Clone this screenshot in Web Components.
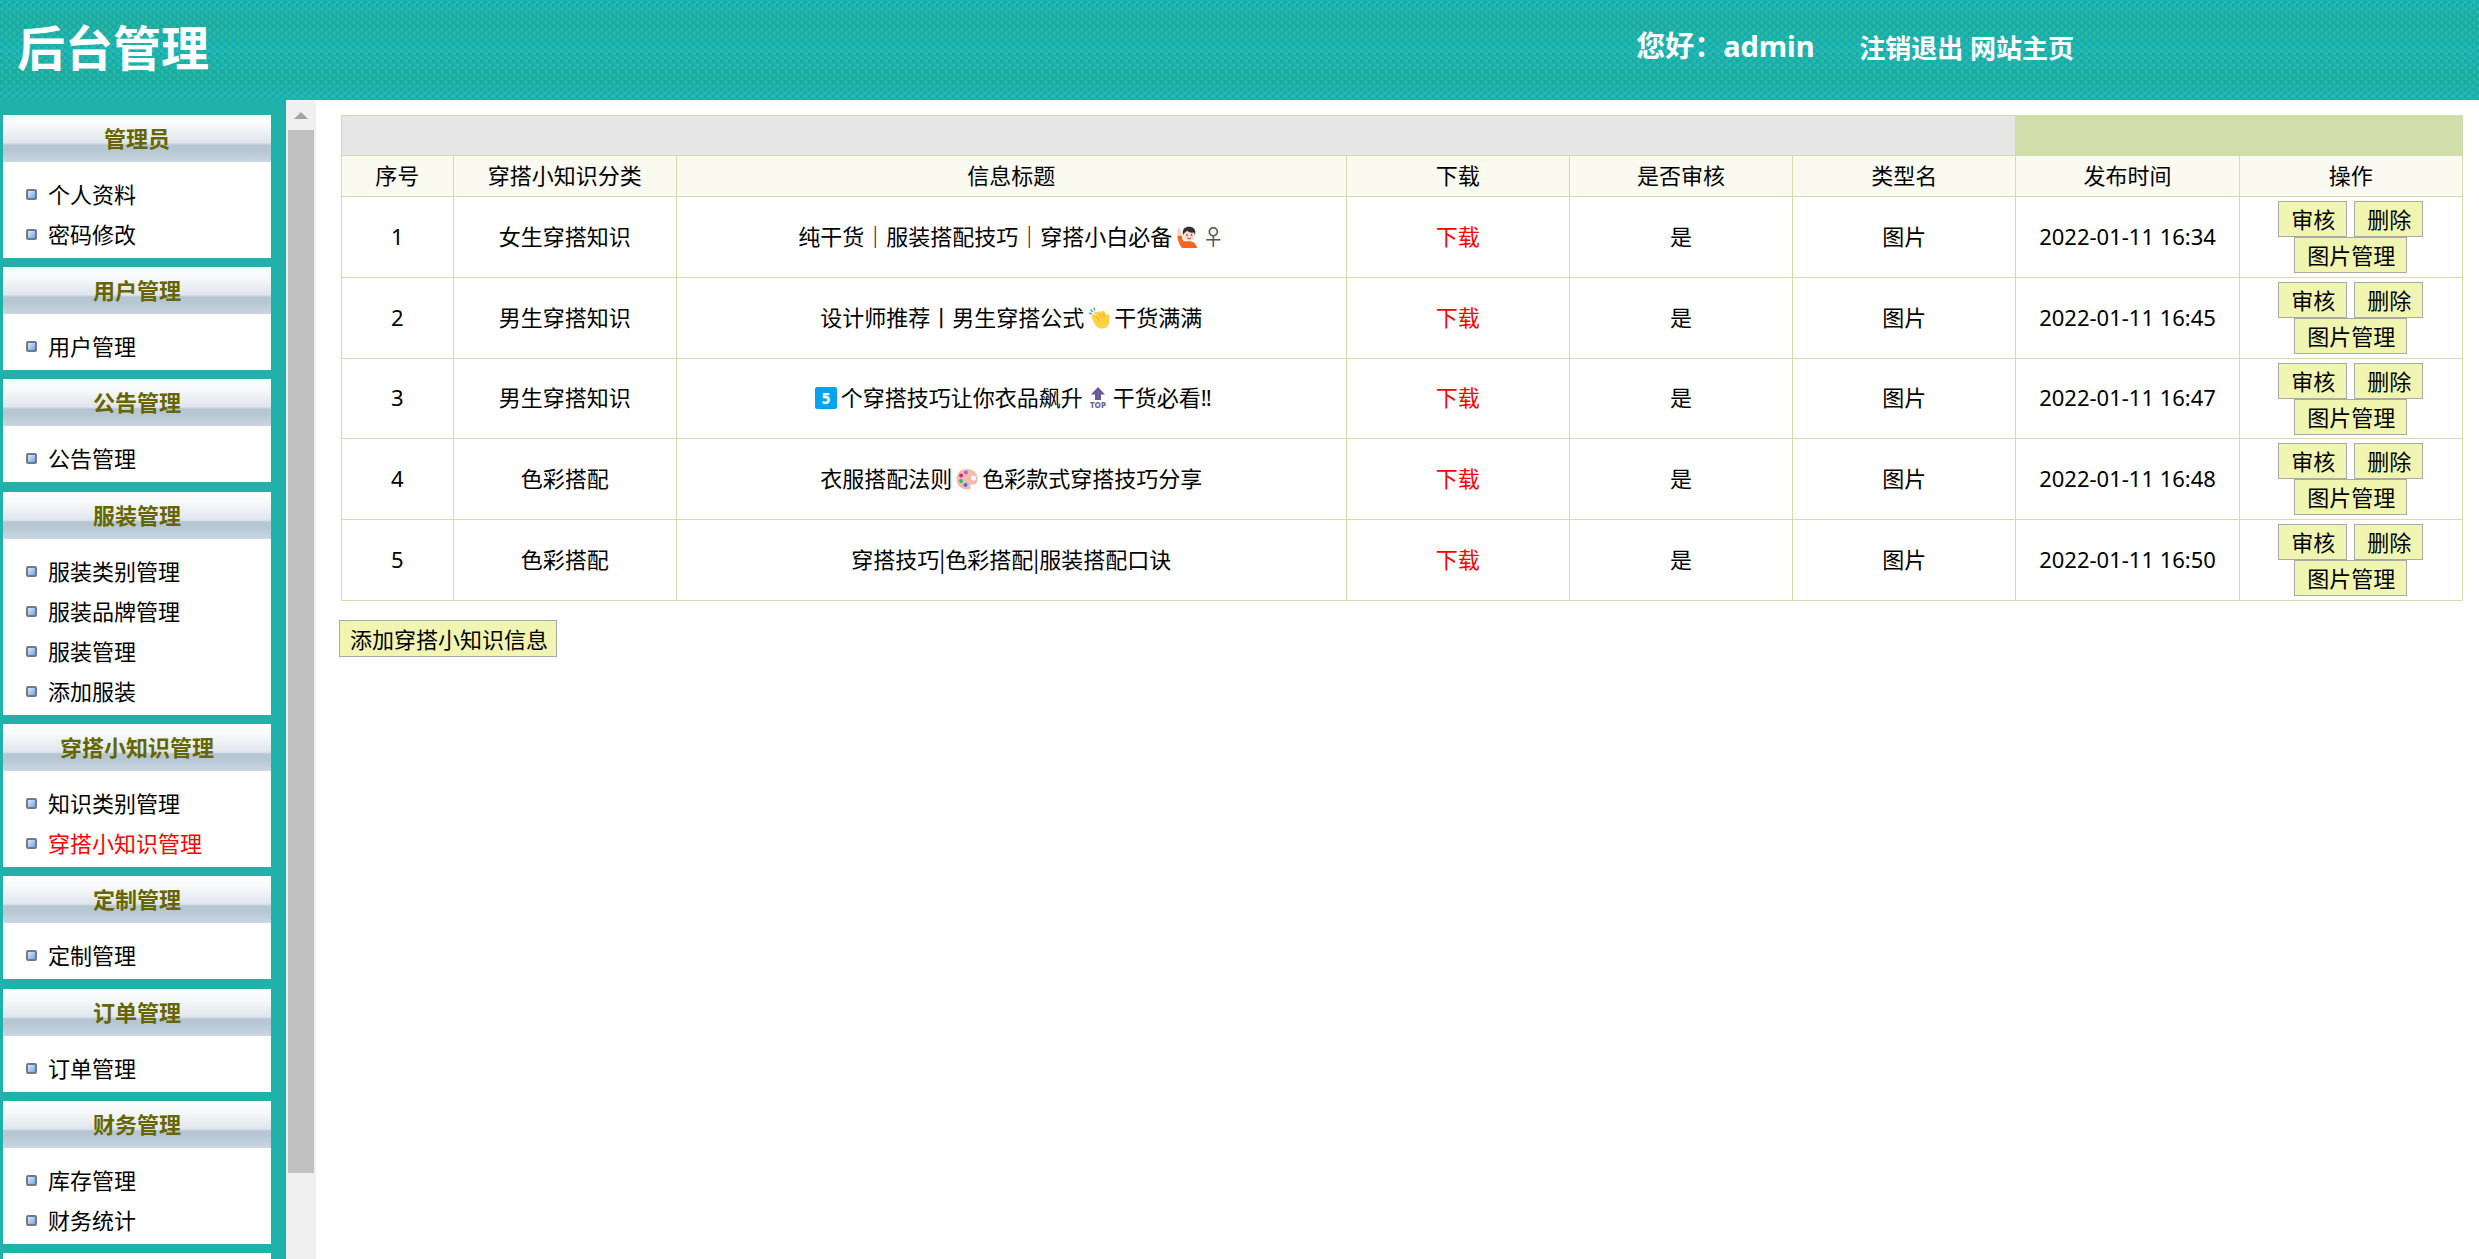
<!DOCTYPE html>
<html lang="zh-CN">
<head>
<meta charset="utf-8">
<title>后台管理</title>
<style>
  body {
    margin: 0;
    font-family: "Noto Sans", "Noto Sans CJK SC", sans-serif;
    font-size: 22px;
    color: #000;
    background: #fff;
  }
</style>
</head>
<body>
<admin-layout>
  <admin-header slot="header" title="后台管理" user="admin"></admin-header>

  <menu-group slot="menu" title="管理员">
    <menu-item>个人资料</menu-item>
    <menu-item>密码修改</menu-item>
  </menu-group>
  <menu-group slot="menu" title="用户管理">
    <menu-item>用户管理</menu-item>
  </menu-group>
  <menu-group slot="menu" title="公告管理">
    <menu-item>公告管理</menu-item>
  </menu-group>
  <menu-group slot="menu" title="服装管理">
    <menu-item>服装类别管理</menu-item>
    <menu-item>服装品牌管理</menu-item>
    <menu-item>服装管理</menu-item>
    <menu-item>添加服装</menu-item>
  </menu-group>
  <menu-group slot="menu" title="穿搭小知识管理">
    <menu-item>知识类别管理</menu-item>
    <menu-item active>穿搭小知识管理</menu-item>
  </menu-group>
  <menu-group slot="menu" title="定制管理">
    <menu-item>定制管理</menu-item>
  </menu-group>
  <menu-group slot="menu" title="订单管理">
    <menu-item>订单管理</menu-item>
  </menu-group>
  <menu-group slot="menu" title="财务管理">
    <menu-item>库存管理</menu-item>
    <menu-item>财务统计</menu-item>
  </menu-group>
  <menu-group slot="menu"></menu-group>

  <knowledge-table></knowledge-table>
  <action-button wide>添加穿搭小知识信息</action-button>
</admin-layout>

<script>
class AdminLayout extends HTMLElement {
  constructor() {
    super();
    this.attachShadow({ mode: 'open' });
  }

  connectedCallback() {
    this.shadowRoot.innerHTML = `
      <style>
        *, *::before, *::after {
          box-sizing: border-box;
        }
        :host {
          display: flex;
          flex-direction: column;
          height: 100vh;
          overflow: hidden;
        }
        .body {
          flex: 1;
          min-height: 0;
          display: flex;
        }
        nav {
          width: 286px;
          padding: 15px 15px 0 3px;
          background: #20b2aa;
          overflow: hidden;
        }
        ::slotted(menu-group) {
          margin-bottom: 9px;
        }
        ::slotted(menu-group:nth-of-type(3n)) {
          margin-bottom: 10px;
        }
        main {
          flex: 1;
          min-width: 0;
          padding: 15px 16px 0 23px;
          overflow: hidden;
        }
      </style>
      <slot name="header"></slot>
      <div class="body">
        <nav><slot name="menu"></slot></nav>
        <scroll-track></scroll-track>
        <main><slot></slot></main>
      </div>
    `;
  }
}

class AdminHeader extends HTMLElement {
  constructor() {
    super();
    this.attachShadow({ mode: 'open' });
  }

  connectedCallback() {
    const title = this.getAttribute('title');
    const user = this.getAttribute('user');

    this.shadowRoot.innerHTML = `
      <style>
        /* woven dot texture */
        :host {
          display: block;
          flex: none;
          color: #fff;
          font-weight: bold;
          background-color: #1eb0a6;
          background-image:
            radial-gradient(circle at 2px 2px, #25c8a2 0, transparent 2px),
            radial-gradient(circle at 6px 5px, #25c8a2 0, transparent 2px),
            radial-gradient(circle at 5px 2px, #12a3bc 0, transparent 2px),
            radial-gradient(circle at 1px 5px, #12a3bc 0, transparent 2px),
            linear-gradient(#1fb3b0, #22ab9c 50%, #1fb3b0);
          background-size: 8px 7px, 8px 7px, 8px 7px, 8px 7px, 100% 50px;
        }
        header {
          display: grid;
          grid-template-columns: 66% 9% 1fr;
          align-items: center;
          height: 96px;
          padding-bottom: 4px;
        }
        h1 {
          margin: 0;
          padding-left: 17px;
          font-size: 48px;
          line-height: 94px;
        }
        .user {
          font-size: 29px;
          line-height: 90px;
          height: 94px;
          white-space: nowrap;
        }
        .links {
          font-size: 26px;
          line-height: 94px;
          white-space: nowrap;
        }
        a {
          color: inherit;
          text-decoration: none;
        }
      </style>
      <header>
        <h1>${title}</h1>
        <span class="user">您好：${user}</span>
        <span class="links"><a href="#">注销退出</a> <a href="#">网站主页</a></span>
      </header>
    `;
  }
}

class ScrollTrack extends HTMLElement {
  constructor() {
    super();
    this.attachShadow({ mode: 'open' });
    this.shadowRoot.innerHTML = `
      <style>
        :host {
          display: flex;
          flex-direction: column;
          flex: none;
          width: 30px;
          background: #f0f0f0;
        }
        svg {
          display: block;
          flex: none;
        }
        .thumb {
          height: 90%;
          margin: 0 2px;
          background: #c1c1c1;
        }
      </style>
      <svg width="30" height="30" viewBox="0 0 30 30" aria-hidden="true">
        <path d="M8 19 L15 12 L22 19 Z" fill="#a3a3a3"/>
      </svg>
      <div class="thumb"></div>
    `;
  }
}

class MenuGroup extends HTMLElement {
  constructor() {
    super();
    this.attachShadow({ mode: 'open' });
  }

  connectedCallback() {
    const title = this.getAttribute('title') || '';

    this.shadowRoot.innerHTML = `
      <style>
        :host {
          display: block;
          background: #fff;
        }
        h2 {
          margin: 0;
          height: 47px;
          font-size: 22px;
          line-height: 46px;
          text-align: center;
          color: #666600;
          background: linear-gradient(#fff 0, #f4f7f8 13px, #dfe5ec 28px, #b5c5d2 30px, #b7c7d4 36px, #cad7e1 47px);
        }
        .items {
          padding: 12px 0 4px;
        }
      </style>
      <h2>${title}</h2>
      <div class="items" role="list"><slot></slot></div>
    `;
  }
}

class MenuItem extends HTMLElement {
  constructor() {
    super();
    this.attachShadow({ mode: 'open' });
    this.shadowRoot.innerHTML = `
      <style>
        :host {
          display: block;
        }
        a {
          display: flex;
          align-items: center;
          gap: 11px;
          height: 40px;
          padding-left: 23px;
          line-height: 40px;
          color: #000;
          text-decoration: none;
        }
        :host([active]) a {
          color: #f00;
        }
      </style>
      <a href="#">
        <svg width="11" height="11" viewBox="0 0 11 11" aria-hidden="true">
          <defs>
            <linearGradient id="g" x1="0" y1="0" x2="1" y2="1">
              <stop offset="0" stop-color="#dbe9ff"/>
              <stop offset="1" stop-color="#6fa3f5"/>
            </linearGradient>
          </defs>
          <rect width="11" height="11" rx="2" fill="#74797f"/>
          <rect x="2" y="2" width="7" height="7" fill="url(#g)"/>
        </svg>
        <slot></slot>
      </a>
    `;
  }

  connectedCallback() {
    this.setAttribute('role', 'listitem');
  }
}

class ActionButton extends HTMLElement {
  constructor() {
    super();
    this.attachShadow({ mode: 'open' });
    this.shadowRoot.innerHTML = `
      <style>
        :host {
          display: inline-block;
          vertical-align: top;
        }
        button {
          display: block;
          height: 36px;
          margin: 0;
          padding: 0 11px 0 12px;
          border: 1px solid #a9a9a9;
          border-radius: 0;
          background: #f0f6b1;
          color: #000;
          font-family: inherit;
          font-size: 22px;
          line-height: 34px;
          white-space: nowrap;
        }
        :host([wide]) button {
          height: 37px;
          padding: 0 8px 0 10px;
        }
      </style>
      <button type="button"><slot></slot></button>
    `;
  }
}

/* small colour pictograms used inside titles */
const EMOJI = {
  hand: `
    <path d="M2 2.500c1-1.500 2-1 2 0l1 5c.5 3 1 5 1.500 6l-4 1c-1-3-2-9-.5-12z" fill="#fbd3c5"/>
    <path d="M1.500 10l4-.5 1.500 5c2 1 3 .8 6 .8 4 0 7 2 8 6.700H6c-2.500-3-4.500-8-4.500-12z" fill="#ff641f"/>
    <circle cx="13" cy="9" r="6" fill="#fddacb"/>
    <path d="M7 9C6 3 9 .8 13 .8s7.500 2.500 6 8.200l-1-2.500c-3 .5-6-.5-7-2-1 2-3 2-4 4.500z" fill="#2f2f33"/>
    <circle cx="11" cy="9" r=".8" fill="#333"/><circle cx="15.500" cy="9" r=".8" fill="#333"/>
    <path d="M11.500 12q1.700 1.500 3.500 0" stroke="#a44" fill="none"/>`,
  clap: `
    <path d="M1 6l3 1M2.500 2.500l2.500 2.500M6 .5l.5 3" stroke="#4aa8f0" stroke-width="1.500"/>
    <path d="M4 8c1.500-1.500 3-.5 4 1l-2-3c1-2 3-1 4 0 0-2 2-2.500 3.500-1 1-1.500 2.500-1 3.500.5l2 2.500c1-1.500 2.500-.5 2.500 1l-.5 7c-1 4-4 6-8 5.500-4-.5-6-4-7.500-7C4.500 12 3 10 4 8z" fill="#ffd23f"/>
    <path d="M8 9l3.500 5M10.500 6.500l4 5M14 6l3 4" stroke="#e0a92b" stroke-width=".8" fill="none"/>`,
  five: `
    <rect width="22" height="22" rx="2" fill="#00a4ef"/>
    <text x="11" y="17" text-anchor="middle" font-size="15" font-weight="800" fill="#fff">5</text>`,
  top: `
    <path d="M11 0l7 7.500h-4V13H8V7.500H4z" fill="#6b5b9e"/>
    <text x="11" y="21" text-anchor="middle" font-size="8" font-weight="800" fill="#6b5b9e">TOP</text>`,
  palette: `
    <path d="M11 1c6 0 10.500 4 10.500 9.500 0 4-2 6.500-5 6-2-.3-3 .8-2 2.500.8 1.500-.5 2.500-3 2.500C5 21.500.500 17 .500 11S5 1 11 1z" fill="#fdb8ab"/>
    <circle cx="17.500" cy="10" r="2.500" fill="#fff"/>
    <circle cx="10" cy="4.500" r="1.900" fill="#9b6bd0"/>
    <circle cx="5" cy="7.500" r="1.900" fill="#f0138c"/>
    <circle cx="5" cy="13" r="1.900" fill="#0cc46a"/>
    <circle cx="9.500" cy="17" r="1.900" fill="#3a6cf5"/>`
};

class InlineEmoji extends HTMLElement {
  constructor() {
    super();
    this.attachShadow({ mode: 'open' });
  }

  connectedCallback() {
    this.shadowRoot.innerHTML = `
      <style>
        :host {
          display: inline-block;
          width: 22px;
          height: 22px;
          margin: 0 4px;
          vertical-align: -3px;
          font-family: "Noto Sans", sans-serif;
        }
        svg {
          display: block;
          overflow: visible;
        }
      </style>
      <svg width="22" height="22" viewBox="0 0 22 22" aria-hidden="true">${EMOJI[this.getAttribute('name')]}</svg>
    `;
  }
}

const emoji = (name) => `<inline-emoji name="${name}"></inline-emoji>`;

const ROWS = [
  ['女生穿搭知识', `纯干货｜服装搭配技巧｜穿搭小白必备${emoji('hand')}<span class="sign">♀</span>`, '2022-01-11 16:34'],
  ['男生穿搭知识', `设计师推荐丨男生穿搭公式${emoji('clap')}干货满满`, '2022-01-11 16:45'],
  ['男生穿搭知识', `${emoji('five')}个穿搭技巧让你衣品飙升${emoji('top')}干货必看<span class="latin">‼</span>`, '2022-01-11 16:47'],
  ['色彩搭配', `衣服搭配法则${emoji('palette')}色彩款式穿搭技巧分享`, '2022-01-11 16:48'],
  ['色彩搭配', '穿搭技巧|色彩搭配|服装搭配口诀', '2022-01-11 16:50']
];

class KnowledgeTable extends HTMLElement {
  constructor() {
    super();
    this.attachShadow({ mode: 'open' });
  }

  connectedCallback() {
    const rows = ROWS.map(([type, title, time], i) => `
      <tr class="row">
        <td>${i + 1}</td>
        <td>${type}</td>
        <td class="title">${title}</td>
        <td><a href="#">下载</a></td>
        <td>是</td>
        <td>图片</td>
        <td>${time}</td>
        <td class="ops">
          <div class="actions">
            <action-button>审核</action-button>
            <action-button>删除</action-button>
            <action-button>图片管理</action-button>
          </div>
        </td>
      </tr>`).join('');

    this.shadowRoot.innerHTML = `
      <style>
        :host {
          display: block;
          margin: 0 0 19px 2px;
        }
        table {
          width: 100%;
          table-layout: fixed;
          border-collapse: collapse;
          text-align: center;
        }
        th, td {
          padding: 0 0 3px;
          border: 1px solid #d1ddaa;
          font-weight: normal;
          line-height: 30px;
        }
        .bar {
          height: 40px;
        }
        .bar td {
          background: #e6e6e6;
        }
        .bar td + td {
          background: #d1ddaa;
        }
        .head {
          height: 41px;
          background: #fafaf1;
        }
        .row {
          height: 81px;
        }
        .row:nth-child(5) {
          height: 80px;
        }
        .row .title {
          padding-bottom: 4px;
          font-family: "Noto Sans CJK SC", sans-serif;
        }
        .row .ops {
          padding: 0;
        }
        .latin {
          font-family: "Noto Sans", sans-serif;
        }
        .sign {
          color: #555;
        }
        a {
          color: #f00;
          text-decoration: none;
        }
        .actions {
          display: flex;
          flex-wrap: wrap;
          justify-content: center;
          column-gap: 7px;
          width: 180px;
          margin: 0 auto;
        }
      </style>
      <table>
        <colgroup>
          <col style="width: 5%"><col style="width: 10%"><col style="width: 30%">
          <col style="width: 10%"><col style="width: 10%"><col style="width: 10%">
          <col style="width: 10%"><col style="width: 10%">
        </colgroup>
        <tbody>
          <tr class="bar"><td colspan="6"></td><td colspan="2"></td></tr>
          <tr class="head">
            <th>序号</th><th>穿搭小知识分类</th><th>信息标题</th><th>下载</th>
            <th>是否审核</th><th>类型名</th><th>发布时间</th><th>操作</th>
          </tr>
          ${rows}
        </tbody>
      </table>
    `;
  }
}

customElements.define('admin-layout', AdminLayout);
customElements.define('admin-header', AdminHeader);
customElements.define('scroll-track', ScrollTrack);
customElements.define('menu-group', MenuGroup);
customElements.define('menu-item', MenuItem);
customElements.define('action-button', ActionButton);
customElements.define('inline-emoji', InlineEmoji);
customElements.define('knowledge-table', KnowledgeTable);
</script>
</body>
</html>
